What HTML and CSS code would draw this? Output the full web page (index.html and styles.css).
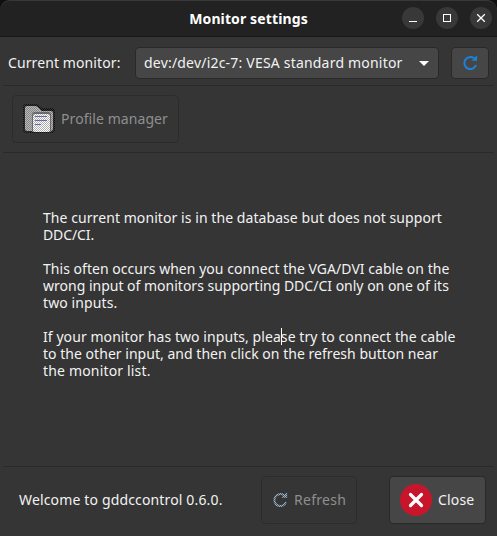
FILE: index.html
```
<!DOCTYPE html>
<html lang="en">
<head>
    <meta charset="UTF-8">
    <title>Monitor settings</title>
    <link rel="stylesheet" href="styles.css">
</head>
<body>
    <div class="window">
        <header class="titlebar">
            <h1>Monitor settings</h1>
            <div class="window-buttons">
                <button aria-label="Minimize"><svg width="22" height="22"><path d="M7 14.5h8" stroke="#fff"/></svg></button>
                <button aria-label="Maximize"><svg width="22" height="22"><rect x="7.5" y="7.5" width="7" height="7" fill="none" stroke="#fff"/></svg></button>
                <button aria-label="Close"><svg width="22" height="22"><path d="M7.2 7.2l7.6 7.6M14.8 7.2l-7.6 7.6" stroke="#fff" stroke-width="1.3"/></svg></button>
            </div>
        </header>

        <!-- Monitor list -->
        <div class="monitor-row">
            <span class="label">Current monitor:</span>
            <button class="btn combo">
                <span>dev:/dev/i2c-7: VESA standard monitor</span>
                <svg width="10" height="5"><path d="M0 0h10L5 5z" fill="#fff"/></svg>
            </button>
            <button class="btn reload" aria-label="Refresh monitor list">
                <svg width="16" height="16" fill="none"><path d="M12 3.3A6 6 0 1 0 14 10" stroke="#1e80d8" stroke-width="2"/><path d="M9.5 5.8h5.6V.6l-2.4 1.6z" fill="#1e80d8"/></svg>
            </button>
        </div>

        <div class="toolbar">
            <button class="btn disabled profile">
                <svg width="32" height="32">
                    <defs>
                        <pattern id="dots" width="2" height="2" patternUnits="userSpaceOnUse">
                            <path d="M0 0h1v1H0zM1 1h1v1H1z" fill="#353535"/>
                        </pattern>
                        <pattern id="edge" width="2" height="2" patternUnits="userSpaceOnUse">
                            <path d="M0 0h1v1H0zM1 1h1v1H1z" fill="#111"/>
                        </pattern>
                    </defs>
                    <path d="M0 4q0-3 3-3h10q2 0 3 1.500l3 2.500h10q3 0 3 3v18q0 4-3 4H3q-3 0-3-3z" fill="url(#edge)"/>
                    <path d="M2 5q0-2 2-2h8q1.500 0 2.500 1l4 4H28q2 0 2 2v15q0 3-2 3H4q-2 0-2-2z" fill="#b8b8b8"/>
                    <path d="M9 12q0-3 3-3h13q3 0 3 3v17H9z" fill="#777"/>
                    <rect x="10" y="11" width="17" height="18" rx="2" fill="#fff"/>
                    <path d="M12 13.500h12M12 17.500h12M12 21.500h6" stroke="#7777c8"/>
                    <path d="M1 3h12l4 5h14v21H1z" fill="url(#dots)" opacity=".4"/>
                </svg>
                <span>Profile manager</span>
            </button>
        </div>

        <main class="message">
            <p>
                <span class="l1">The current monitor is in the database but does not support</span>
                <span class="l2">DDC/CI.</span>
            </p>
            <p>
                <span class="l3">This often occurs when you connect the VGA/DVI cable on the</span>
                <span class="l4">wrong input of monitors supporting DDC/CI only on one of its</span>
                <span class="l5">two inputs.</span>
            </p>
            <p>
                <span class="l6">If your monitor has two inputs, plea<i class="caret"></i>se try to connect the cable</span>
                <span class="l7">to the other input, and then click on the refresh button near</span>
                <span class="l8">the monitor list.</span>
            </p>
        </main>

        <footer class="statusbar">
            <span class="status">Welcome to gddccontrol 0.6.0.</span>
            <button class="btn disabled refresh">
                <svg width="16" height="16" fill="none"><path d="M12 3.300A6 6 0 1 0 14 10" stroke="#9ab4ca" stroke-width="2"/><path d="M9.500 5.800h5.600V.6l-2.400 1.600z" fill="#9ab4ca"/><path d="M0 0h16v16H0z" fill="url(#dots)" opacity=".7"/></svg>
                <span>Refresh</span>
            </button>
            <button class="btn close">
                <svg width="32" height="32"><circle cx="16" cy="16" r="16" fill="#c7162b"/><path d="M10.500 10.500l11 11M21.500 10.500l-11 11" stroke="#fff" stroke-width="3.200" stroke-linecap="round"/></svg>
                <span>Close</span>
            </button>
        </footer>
    </div>
</body>
</html>
```
FILE: styles.css
```
* {
    box-sizing: border-box;
}
body {
    margin: 0;
    background: #101010;
    color: #f2f2f2;
    font-family: "Noto Sans", sans-serif;
    font-size: 14px;
    line-height: 17px;
}
.window {
    height: 536px;
    display: flex;
    flex-direction: column;
    background: #353535;
    border-radius: 10px 10px 0 0;
    overflow: hidden;
}
button {
    margin: 0;
    padding: 0;
    border: 0;
    color: inherit;
    font: inherit;
}
svg {
    display: block;
    flex: none;
}
span {
    white-space: nowrap;
}
.titlebar {
    position: relative;
    flex: none;
    height: 37px;
    background: #222;
    border-top: 1px solid #383838;
    border-bottom: 1px solid #181818;
    border-radius: 10px 10px 0 0;
}
.titlebar h1 {
    margin: 0;
    text-align: center;
    font-size: 14px;
    line-height: 35px;
    letter-spacing: 0.12px;
    color: #fff;
}
.window-buttons {
    position: absolute;
    top: 6px;
    right: 5px;
    display: flex;
    gap: 12px;
}
.window-buttons button {
    width: 22px;
    height: 22px;
    border-radius: 50%;
    background: #383838;
}
.monitor-row {
    flex: none;
    height: 49px;
    margin: 0 3px;
    padding: 10px 5px 0;
    display: flex;
    align-items: flex-start;
    border-bottom: 1px solid #2a2a2a;
}
.label {
    width: 127px;
    line-height: 32px;
    letter-spacing: 0.1px;
}
.btn {
    display: flex;
    align-items: center;
    background: #464646;
    border: 1px solid #292929;
    border-radius: 4px;
}
.btn span {
    padding-bottom: 2px;
}
.combo {
    width: 304px;
    height: 32px;
    padding: 0 9px 0 8px;
    justify-content: space-between;
    letter-spacing: 0.2px;
}
.reload {
    width: 38px;
    height: 32px;
    margin-left: 12px;
    justify-content: center;
}
.disabled {
    background: #353535;
    border-color: #2c2c2c;
    color: #8f8f8f;
}
.toolbar {
    flex: none;
    height: 67px;
    margin: 0 3px;
    padding: 9px;
    border-bottom: 1px solid #2a2a2a;
}
.profile {
    width: 167px;
    height: 48px;
    padding-left: 10px;
    gap: 6px;
    letter-spacing: 0.08px;
}
.message {
    flex: 1;
    padding: 56px 0 0 43px;
}
.message p {
    margin: 0 0 17px;
}
.message span {
    display: block;
}
.l1, .l6 {
    letter-spacing: 0.07px;
}
.l2 {
    letter-spacing: -0.1px;
}
.l3, .l7 {
    letter-spacing: 0.03px;
}
.l5 {
    letter-spacing: 0.1px;
}
.l8 {
    letter-spacing: 0.17px;
}
.caret {
    position: absolute;
    width: 1px;
    height: 17px;
    background: #fff;
}
.statusbar {
    flex: none;
    height: 70px;
    margin: 0 3px;
    padding: 9px 8px 0 16px;
    display: flex;
    border-top: 1px solid #2a2a2a;
}
.status {
    width: 242px;
    line-height: 48px;
    letter-spacing: 0.15px;
}
.refresh {
    width: 96px;
    height: 48px;
    padding-left: 10px;
    gap: 6px;
    letter-spacing: 0.3px;
}
.close {
    width: 97px;
    height: 48px;
    margin-left: 32px;
    padding-left: 10px;
    gap: 6px;
    letter-spacing: 0.15px;
}
```
